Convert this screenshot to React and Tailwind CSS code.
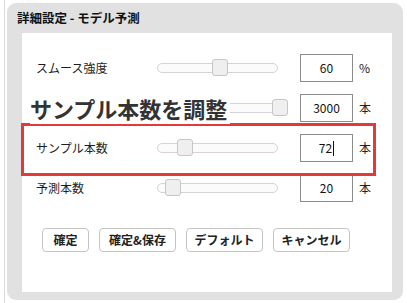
import { useState } from "react";

const FONT = "font-['Noto_Sans_CJK_JP','Noto_Sans',sans-serif]";

const ROWS = [
  { id: "smooth", label: "スムース強度", value: "60", unit: "%", thumb: 55 },
  { id: "samples", banner: "サンプル本数を調整", value: "3000", unit: "本", thumb: 106, shift: true },
  { id: "sample", label: "サンプル本数", value: "72", unit: "本", thumb: 20, caret: true },
  { id: "predict", label: "予測本数", value: "20", unit: "本", thumb: 8 },
];

function Slider({ thumb, shift }) {
  return (
    <div className={`relative h-[28px] w-[121px] ${shift ? "ml-[9px]" : ""}`}>
      <div className="absolute left-0 right-0 top-[9px] h-[10px] rounded-full border border-[#d4d4d4] bg-[#fbfbfb]" />
      <div
        className="absolute top-[5px] h-[17px] w-[16px] rounded-[3px] border border-[#c6c6c6] bg-[#efefef]"
        style={{ left: thumb }}
      />
    </div>
  );
}

function Row({ row }) {
  return (
    <div className="relative flex h-[28px] items-center">
      <div className="w-[121px] text-[12px] text-[#1e1e1e]">
        {row.banner ? (
          <span className="relative z-10 ml-[-6px] whitespace-nowrap bg-white pr-[3px] text-[22px] font-bold leading-[30px] text-[#333]">
            {row.banner}
          </span>
        ) : (
          row.label
        )}
      </div>
      <Slider thumb={row.thumb} shift={row.shift} />
      <div className={`${row.shift ? "ml-[13px]" : "ml-[22px]"} flex h-[28px] w-[53px] items-center justify-center border border-[#8c8c8c] bg-white text-[12px] text-[#111]`}>
        {row.value}
        {row.caret && <span className="ml-px inline-block h-[15px] w-px bg-[#111]" />}
      </div>
      <div className="ml-[6px] text-[12px] text-[#222]">{row.unit}</div>
    </div>
  );
}

export default function App() {
  const [rows] = useState(ROWS);

  return (
    <div className={`flex h-[303px] w-[407px] bg-white pl-[4px] ${FONT}`}>
      <div className="h-full w-px bg-[#dcdcdc]" />
      <div className="ml-[2px] mt-[3px] flex h-[297px] w-[396px] flex-col rounded-[9px] bg-[#e1e1e1]">
        <div className="ml-[10px] mt-[5px] h-[20px] text-[12.5px] font-bold leading-[20px] text-[#111]">
          詳細設定 - モデル予測
        </div>
        <div className="relative ml-[15px] mt-[5px] h-[259px] w-[370px] bg-white">
          <div className="flex flex-col gap-[12px] pl-[14px] pt-[21px]">
            {rows.map((row) => (
              <Row key={row.id} row={row} />
            ))}
          </div>
          <div className="absolute left-[-1px] top-[90px] h-[53px] w-[355px] border-[3px] border-[#e23a3a]" />
          <div className="mt-[26px] flex gap-[10px] pl-[20px]">
            {["確定", "確定&保存", "デフォルト", "キャンセル"].map((label, i) => (
              <button
                key={label}
                type="button"
                className={`h-[24px] ${i === 0 ? "w-[47px]" : "w-[77px]"} rounded-[4px] border border-[#c4c4c4] bg-white text-[12px] font-bold text-[#222]`}
              >
                {label}
              </button>
            ))}
          </div>
        </div>
      </div>
    </div>
  );
}
